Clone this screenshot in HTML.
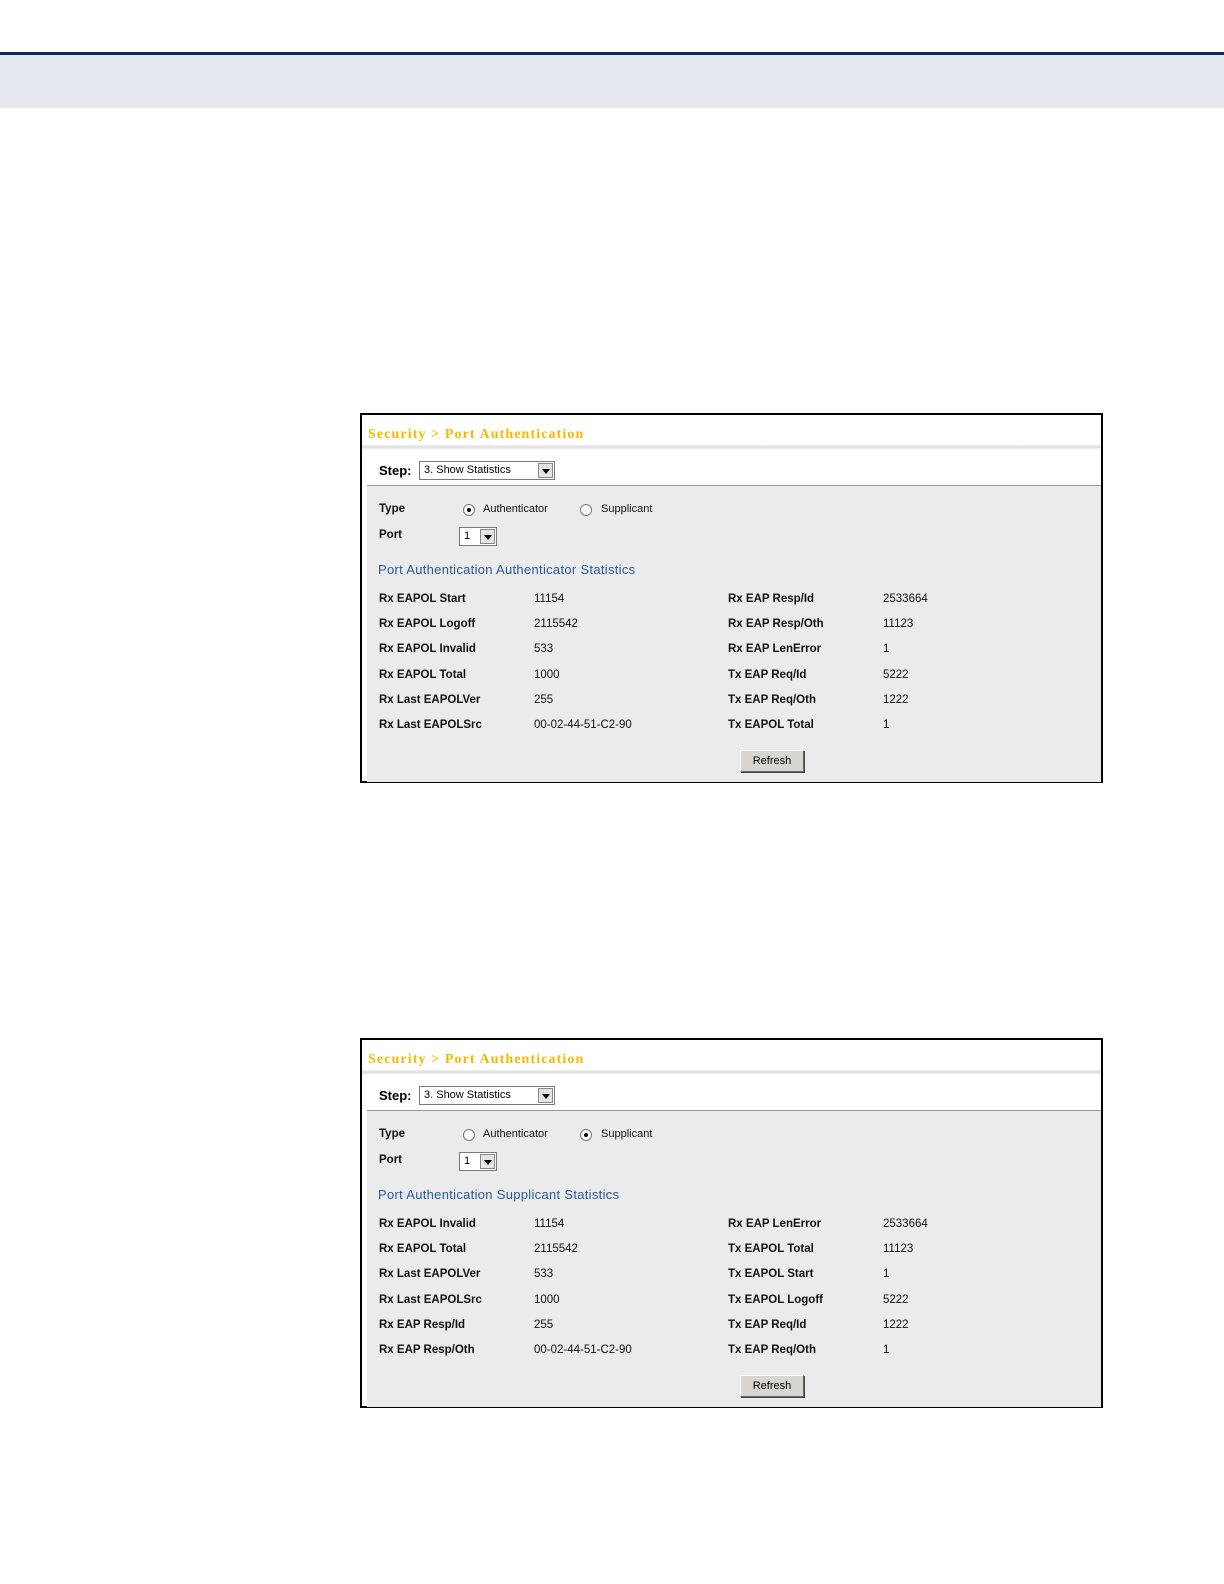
<!DOCTYPE html>
<html><head><style>
body{margin:0;width:1224px;height:1584px;background:#fff;position:relative;font-family:"Liberation Sans",Arial,sans-serif;overflow:hidden}
.top{position:absolute;left:0;top:52px;width:1224px;height:3px;background:#0a2a5e}
.band{position:absolute;left:0;top:55px;width:1224px;height:53px;background:#e6e8ef}
.p{position:absolute;left:360px;width:739px;height:366px;border:2px solid #000;background:#fff}
.p *{position:absolute;white-space:nowrap}
.ttl{left:6px;top:12px;font:bold 14px "Liberation Serif",serif;color:#f5b800;letter-spacing:1.1px}
.gl{left:0;top:29px;width:739px;height:6px;background:linear-gradient(#fff,#ddd,#fff)}
.step{left:17px;top:48px;font:bold 13px "Liberation Sans",sans-serif;color:#000}
.sel{left:57px;top:46px;width:134px;height:17px;border:1px solid #7a7a7a;background:#fff;font-size:11px;line-height:17px}
.sel span{left:4px;top:0}
.arr{right:1px;top:1px;width:15px;height:15px;background:#e4e4e4;border:1px solid #888;box-sizing:border-box}
.arr:after{content:"";position:absolute;left:3px;top:5px;border:4px solid transparent;border-top:5px solid #000}
.gray{left:5px;top:70px;width:734px;height:296px;background:#ebebeb;border-top:1px solid #999}
.lb{font-size:11.5px;font-weight:bold;color:#111}
.v{font-size:11.5px;color:#111}
.rad{width:10px;height:10px;border-radius:50%;border:1px solid #777;background:#fff}
.dot{width:4px;height:4px;border-radius:50%;background:#000;left:3px;top:3px}
.pt{left:97px;top:112px;width:36px;height:17px;border:1px solid #7a7a7a;background:#fff;font-size:11px;line-height:17px}
.hd{left:16px;top:147px;font-size:13px;color:#2a5a9c;letter-spacing:.3px}
.btn{left:378px;top:335px;width:62px;height:20px;background:#d8d6d0;border:1px solid #666;border-top-color:#fff;border-left-color:#fff;box-shadow:1px 1px 0 #444;font-size:11px;line-height:20px;text-align:center}
</style></head><body>
<div class="top"></div><div class="band"></div>

<div class="p" style="top:413px">
<div class="ttl">Security &gt; Port Authentication</div><div class="gl"></div>
<div class="step">Step:</div>
<div class="sel"><span>3. Show Statistics</span><div class="arr"></div></div>
<div class="gray"></div>
<div class="lb" style="left:17px;top:88px">Type</div>
<div class="rad" style="left:101px;top:89px"><div class="dot"></div></div>
<div class="v" style="left:121px;top:88px;font-size:11px">Authenticator</div>
<div class="rad" style="left:218px;top:89px"></div>
<div class="v" style="left:239px;top:88px;font-size:11px">Supplicant</div>
<div class="lb" style="left:17px;top:114px">Port</div>
<div class="pt"><span style="left:4px">1</span><div class="arr"></div></div>
<div class="hd">Port Authentication Authenticator Statistics</div>
<div class="lb" style="left:17px;top:172px;line-height:25.2px">Rx EAPOL Start<br>Rx EAPOL Logoff<br>Rx EAPOL Invalid<br>Rx EAPOL Total<br>Rx Last EAPOLVer<br>Rx Last EAPOLSrc</div>
<div class="v" style="left:172px;top:172px;line-height:25.2px">11154<br>2115542<br>533<br>1000<br>255<br>00-02-44-51-C2-90</div>
<div class="lb" style="left:366px;top:172px;line-height:25.2px">Rx EAP Resp/Id<br>Rx EAP Resp/Oth<br>Rx EAP LenError<br>Tx EAP Req/Id<br>Tx EAP Req/Oth<br>Tx EAPOL Total</div>
<div class="v" style="left:521px;top:172px;line-height:25.2px">2533664<br>11123<br>1<br>5222<br>1222<br>1</div>
<div class="btn">Refresh</div>
</div>

<div class="p" style="top:1038px">
<div class="ttl">Security &gt; Port Authentication</div><div class="gl"></div>
<div class="step">Step:</div>
<div class="sel"><span>3. Show Statistics</span><div class="arr"></div></div>
<div class="gray"></div>
<div class="lb" style="left:17px;top:88px">Type</div>
<div class="rad" style="left:101px;top:89px"></div>
<div class="v" style="left:121px;top:88px;font-size:11px">Authenticator</div>
<div class="rad" style="left:218px;top:89px"><div class="dot"></div></div>
<div class="v" style="left:239px;top:88px;font-size:11px">Supplicant</div>
<div class="lb" style="left:17px;top:114px">Port</div>
<div class="pt"><span style="left:4px">1</span><div class="arr"></div></div>
<div class="hd">Port Authentication Supplicant Statistics</div>
<div class="lb" style="left:17px;top:172px;line-height:25.2px">Rx EAPOL Invalid<br>Rx EAPOL Total<br>Rx Last EAPOLVer<br>Rx Last EAPOLSrc<br>Rx EAP Resp/Id<br>Rx EAP Resp/Oth</div>
<div class="v" style="left:172px;top:172px;line-height:25.2px">11154<br>2115542<br>533<br>1000<br>255<br>00-02-44-51-C2-90</div>
<div class="lb" style="left:366px;top:172px;line-height:25.2px">Rx EAP LenError<br>Tx EAPOL Total<br>Tx EAPOL Start<br>Tx EAPOL Logoff<br>Tx EAP Req/Id<br>Tx EAP Req/Oth</div>
<div class="v" style="left:521px;top:172px;line-height:25.2px">2533664<br>11123<br>1<br>5222<br>1222<br>1</div>
<div class="btn">Refresh</div>
</div>
</body></html>
